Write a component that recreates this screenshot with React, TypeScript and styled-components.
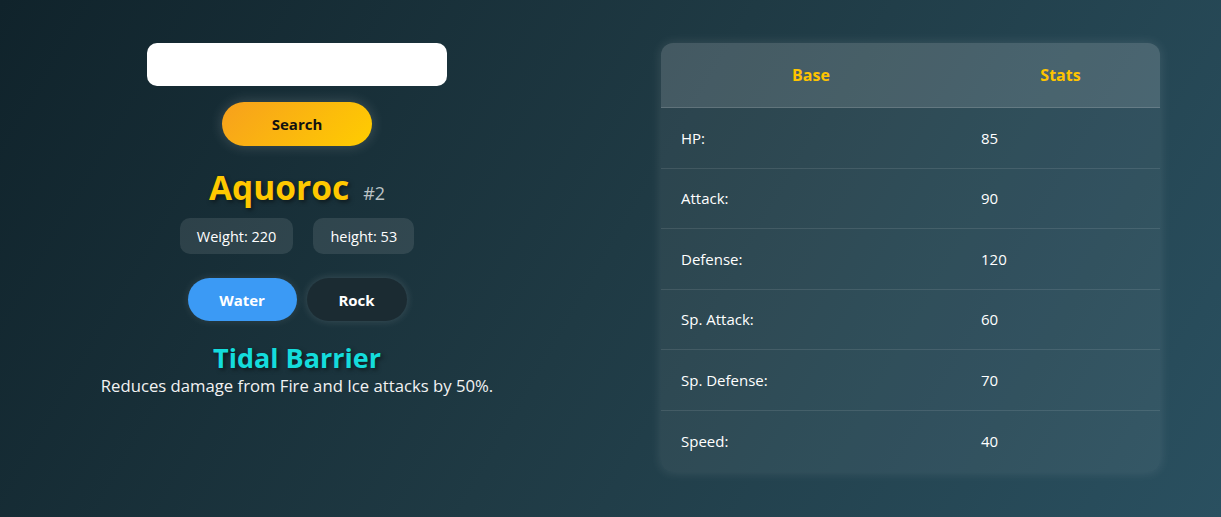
import styled, { createGlobalStyle } from "styled-components";

const GlobalStyle = createGlobalStyle`
  html, body {
    margin: 0;
    padding: 0;
  }
  body {
    min-height: 517px;
    font-family: "Segoe UI", "Open Sans", sans-serif;
    color: #ffffff;
    background: linear-gradient(120deg, #10232b 0%, #1f3a44 50%, #2a5060 100%);
  }
`;

const stats = [
  { label: "HP:", value: 85 },
  { label: "Attack:", value: 90 },
  { label: "Defense:", value: 120 },
  { label: "Sp. Attack:", value: 60 },
  { label: "Sp. Defense:", value: 70 },
  { label: "Speed:", value: 40 },
];

export default function App() {
  return (
    <>
      <GlobalStyle />
      <Page>
        <LeftColumn>
          <SearchInput type="text" />
          <SearchButton>Search</SearchButton>
          <NameRow>
            <Name>Aquoroc</Name>
            <Number>#2</Number>
          </NameRow>
          <ChipRow>
            <Chip>Weight: 220</Chip>
            <Chip>height: 53</Chip>
          </ChipRow>
          <TypeRow>
            <TypePill $bg="#3b9af5" $w={109}>Water</TypePill>
            <TypePill $bg="#1b2b32" $w={100} $glow>Rock</TypePill>
          </TypeRow>
          <AbilityName>Tidal Barrier</AbilityName>
          <AbilityText>Reduces damage from Fire and Ice attacks by 50%.</AbilityText>
        </LeftColumn>
        <StatsTable>
          <thead>
            <tr>
              <HeadCell>Base</HeadCell>
              <HeadCell>Stats</HeadCell>
            </tr>
          </thead>
          <tbody>
            {stats.map((s) => (
              <Row key={s.label}>
                <Cell>{s.label}</Cell>
                <Cell>{s.value}</Cell>
              </Row>
            ))}
          </tbody>
        </StatsTable>
      </Page>
    </>
  );
}

const Page = styled.div`
  display: flex;
  align-items: flex-start;
  padding: 43px 61px 0 61px;
`;

const LeftColumn = styled.div`
  width: 472px;
  display: flex;
  flex-direction: column;
  align-items: center;
`;

const SearchInput = styled.input`
  width: 300px;
  height: 43px;
  box-sizing: border-box;
  border: none;
  border-radius: 10px;
  background: #ffffff;
  outline: none;
  padding: 0 12px;
`;

const SearchButton = styled.button`
  margin-top: 16px;
  width: 150px;
  height: 44px;
  border: none;
  border-radius: 22px;
  background: linear-gradient(135deg, #f7a01d 0%, #ffcd00 100%);
  color: #111111;
  font-family: inherit;
  font-size: 15px;
  font-weight: 700;
  box-shadow: 0 0 14px rgba(255, 255, 255, 0.18);
`;

const NameRow = styled.div`
  margin-top: 20px;
  display: flex;
  align-items: baseline;
  gap: 14px;
`;

const Name = styled.h1`
  margin: 0;
  font-size: 33.5px;
  font-weight: 700;
  color: #ffc800;
  line-height: 42px;
  text-shadow: 2px 2px 4px rgba(0, 0, 0, 0.5);
`;

const Number = styled.span`
  font-size: 18px;
  color: #bcc3c6;
`;

const ChipRow = styled.div`
  margin-top: 10px;
  display: flex;
  gap: 20px;
`;

const Chip = styled.div`
  height: 36px;
  padding: 0 17px;
  display: flex;
  align-items: center;
  border-radius: 10px;
  background: rgba(255, 255, 255, 0.1);
  font-size: 14.5px;
`;

const TypeRow = styled.div`
  margin-top: 24px;
  display: flex;
  gap: 10px;
`;

const TypePill = styled.div<{ $bg: string; $w: number; $glow?: boolean }>`
  width: ${(p) => p.$w}px;
  height: 43px;
  display: flex;
  align-items: center;
  justify-content: center;
  border-radius: 22px;
  background: ${(p) => p.$bg};
  font-size: 15px;
  font-weight: 700;
  box-shadow: ${(p) =>
    p.$glow ? "0 0 8px rgba(255, 255, 255, 0.15)" : "0 0 8px rgba(255, 255, 255, 0.1)"};
`;

const AbilityName = styled.h2`
  margin: 20px 0 0 0;
  font-size: 27px;
  font-weight: 700;
  line-height: 34px;
  color: #14dcdc;
  text-shadow: 2px 2px 4px rgba(0, 0, 0, 0.5);
`;

const AbilityText = styled.p`
  margin: 0;
  font-size: 16.7px;
  line-height: 22px;
  color: #f2f2f2;
`;

const StatsTable = styled.table`
  margin-left: auto;
  width: 499px;
  border-collapse: separate;
  border-spacing: 0;
  border-radius: 12px;
  overflow: hidden;
  background: rgba(255, 255, 255, 0.06);
  box-shadow: 0 0 12px rgba(255, 255, 255, 0.12);
`;

const HeadCell = styled.th`
  height: 64px;
  padding: 0;
  background: rgba(255, 255, 255, 0.12);
  color: #ffc400;
  font-size: 16px;
  font-weight: 700;
  text-align: center;
  border-bottom: 1px solid rgba(255, 255, 255, 0.15);
  &:first-child {
    width: 300px;
  }
`;

const Row = styled.tr`
  &:not(:last-child) td {
    border-bottom: 1px solid rgba(255, 255, 255, 0.1);
  }
  &:last-child td {
    height: 61px;
  }
`;

const Cell = styled.td`
  height: 59.5px;
  padding: 0 20px;
  font-size: 15px;
  color: #ffffff;
`;
